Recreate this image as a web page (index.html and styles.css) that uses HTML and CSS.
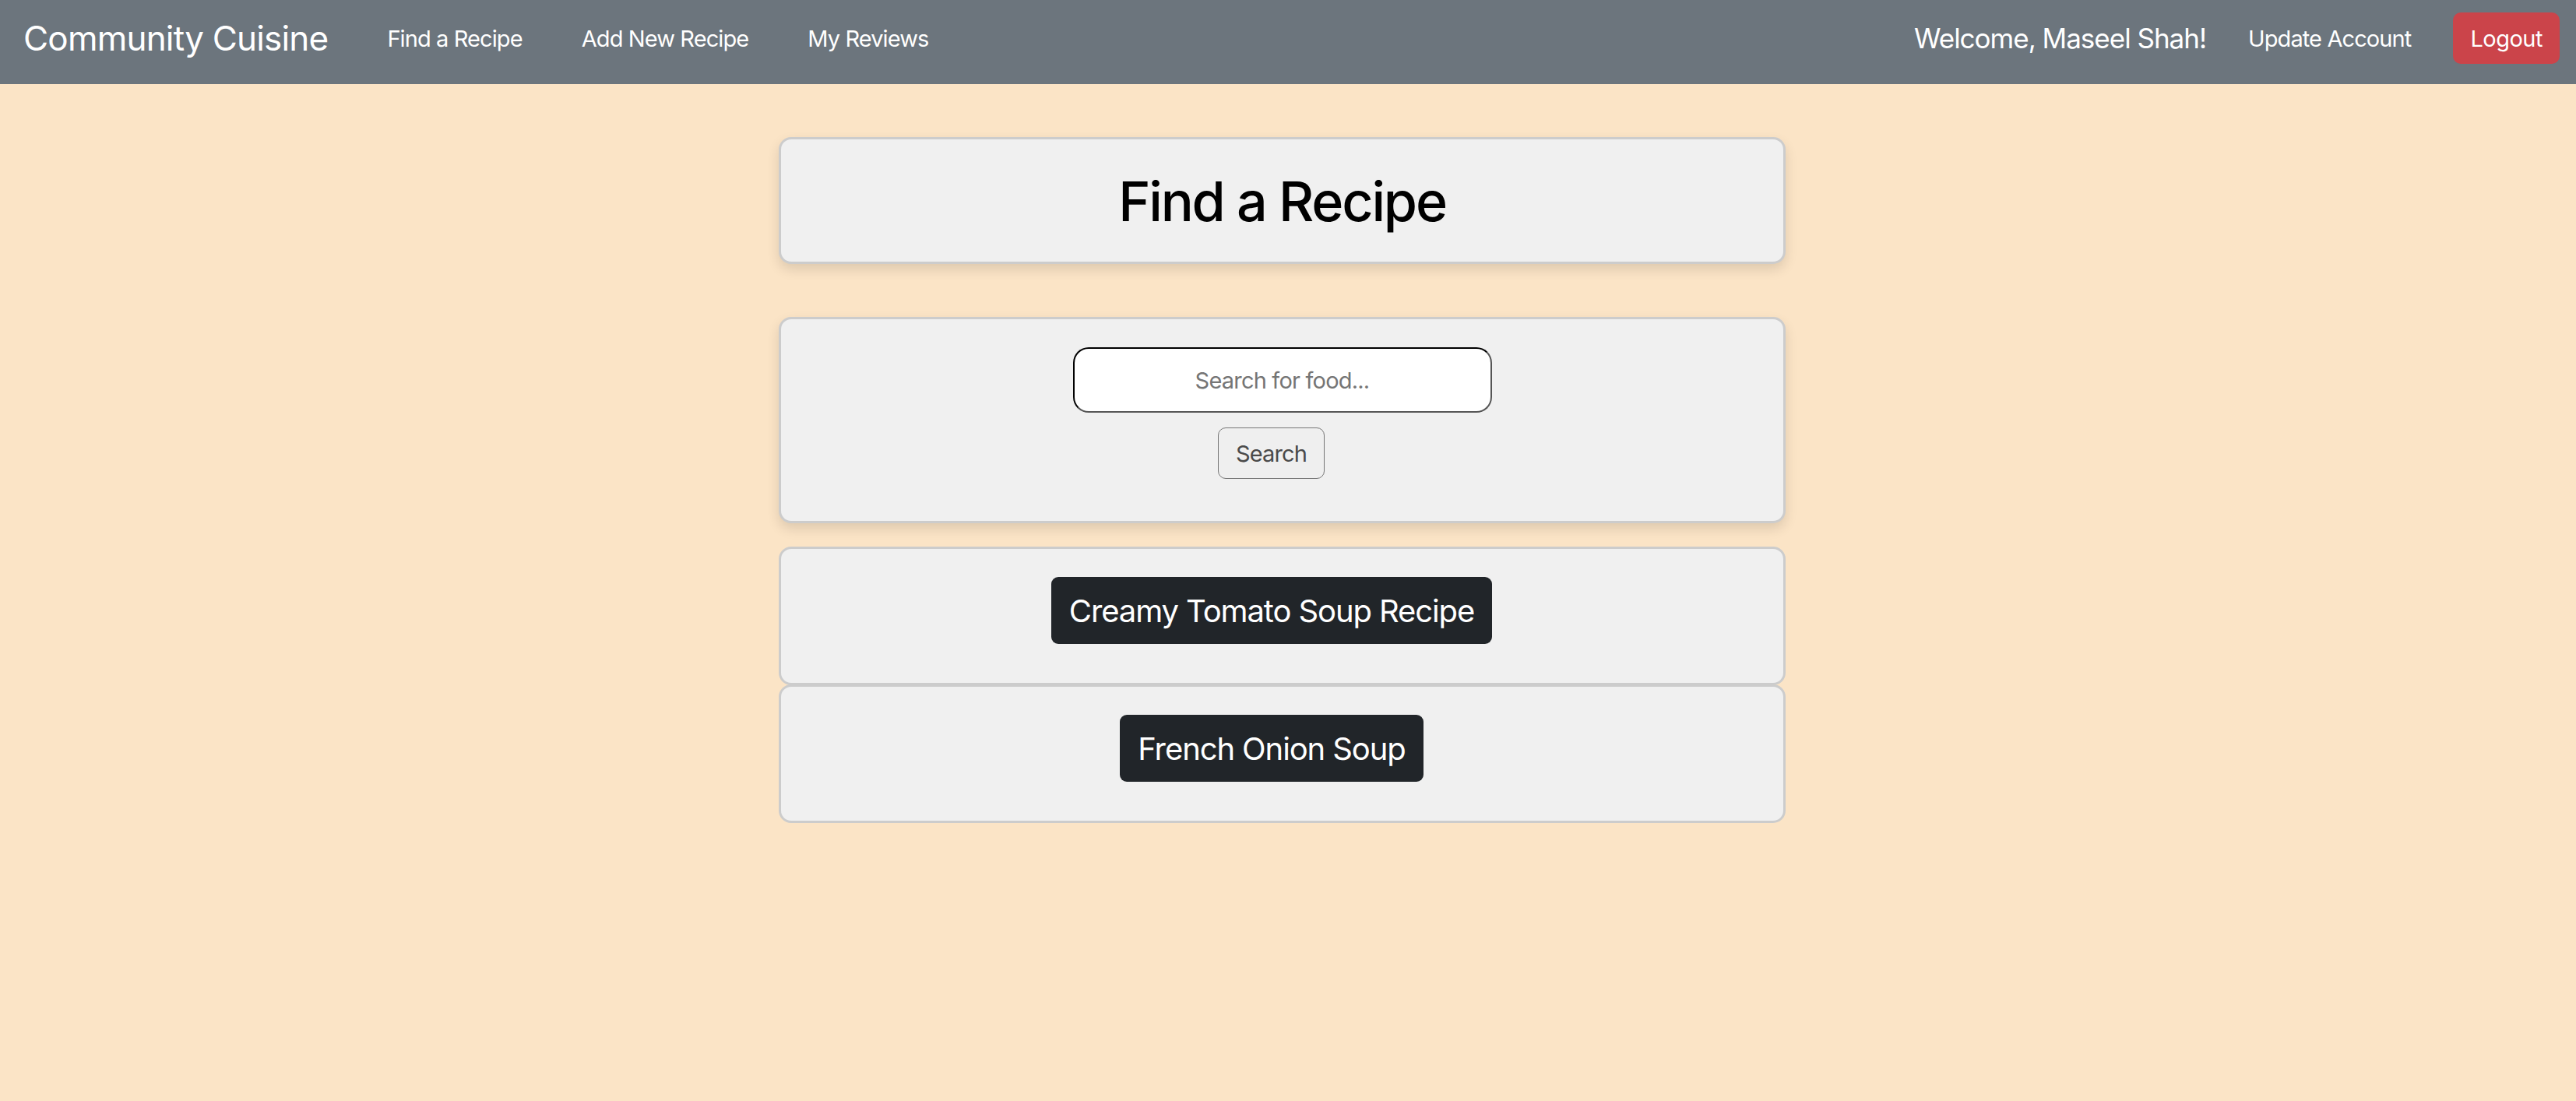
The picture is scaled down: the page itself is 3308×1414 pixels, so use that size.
FILE: index.html
```html
<!DOCTYPE html>
<html lang="en">
<head>
<meta charset="utf-8">
<title>Community Cuisine - Find a Recipe</title>
<link rel="stylesheet" href="styles.css">
</head>
<body>
<nav class="navbar">
  <div class="nav-left">
    <a class="brand" href="#">Community Cuisine</a>
    <a class="nav-link" href="#">Find a Recipe</a>
    <a class="nav-link" href="#">Add New Recipe</a>
    <a class="nav-link" href="#">My Reviews</a>
  </div>
  <div class="nav-right">
    <span class="welcome">Welcome, Maseel Shah!</span>
    <a class="nav-link" href="#">Update Account</a>
    <a class="logout" href="#">Logout</a>
  </div>
</nav>
<main class="page">
  <div class="content">
    <section class="card card-title">
      <h1>Find a Recipe</h1>
    </section>
    <section class="card card-search">
      <input class="search-input" type="text" placeholder="Search for food...">
      <button class="search-btn" type="button">Search</button>
    </section>
    <section class="results">
      <div class="card card-result">
        <a class="recipe-btn" href="#">Creamy Tomato Soup Recipe</a>
      </div>
      <div class="card card-result">
        <a class="recipe-btn" href="#">French Onion Soup</a>
      </div>
    </section>
  </div>
</main>
</body>
</html>
```
FILE: styles.css
```css
* { box-sizing: border-box; }
html, body { margin: 0; padding: 0; }
body {
  background: #fbe4c6;
  font-family: Inter, "Noto Sans", "Liberation Sans", sans-serif;
  min-height: 1414px;
  color: #000;
}
a { text-decoration: none; }

.navbar {
  height: 108px;
  background: #6c757d;
  display: flex;
  align-items: center;
  justify-content: space-between;
  padding: 0 21px 10px 30px;
}
.nav-left, .nav-right { display: flex; align-items: center; }
.nav-left { gap: 76px; }
.nav-right { gap: 54px; }
.brand { color: #fff; font-size: 44px; line-height: 1; letter-spacing: -0.8px; }
.nav-link { color: #fff; font-size: 29px; line-height: 1; letter-spacing: -0.9px; }
.welcome { color: #fff; font-size: 35px; line-height: 1; letter-spacing: -1px; }
.logout {
  display: inline-flex;
  align-items: center;
  height: 66px;
  padding: 0 22px;
  background: #cb444a;
  color: #fff;
  font-size: 29px;
  letter-spacing: -0.5px;
  border-radius: 10px;
}

.page { padding: 68px 15px 0 0; }
.content {
  width: 1293px;
  margin: 0 auto;
}
.card {
  background: #f0f0f0;
  border: 3px solid #cccccc;
  border-radius: 16px;
  text-align: center;
}
.card-title {
  padding: 37px 0 34px;
  box-shadow: 0 7px 16px rgba(0, 0, 0, 0.12);
}
.card-title h1 {
  margin: 0;
  font-size: 70px;
  font-weight: 500;
  letter-spacing: -2.2px;
  line-height: 86px;
}
.card-search {
  margin-top: 68px;
  padding: 36px 0 54px;
  display: flex;
  flex-direction: column;
  align-items: center;
  box-shadow: 0 7px 16px rgba(0, 0, 0, 0.12);
}
.search-input {
  width: 538px;
  height: 84px;
  border: 2px solid;
  border-color: #000 #555 #555 #000;
  border-radius: 20px;
  background: #fff;
  font-family: inherit;
  font-size: 29px;
  letter-spacing: -0.8px;
  text-align: center;
  outline: none;
}
.search-input::placeholder { color: #757575; }
.search-btn {
  margin-top: 19px;
  margin-right: 28px;
  height: 66px;
  padding: 0 22px;
  border: 1px solid #767676;
  border-radius: 10px;
  background: #efefef;
  color: #4a4a4a;
  font-family: inherit;
  font-size: 29px;
  letter-spacing: -0.9px;
}
.results { margin-top: 30px; }
.card-result {
  padding: 36px 0 50px;
  height: 178px;
}
.card-result + .card-result { margin-top: -1px; }
.recipe-btn {
  display: inline-flex;
  align-items: center;
  height: 86px;
  padding: 0 23px;
  margin-right: 27px;
  background: #212529;
  color: #fff;
  font-size: 40px;
  letter-spacing: -1.1px;
  border-radius: 9px;
}
```
